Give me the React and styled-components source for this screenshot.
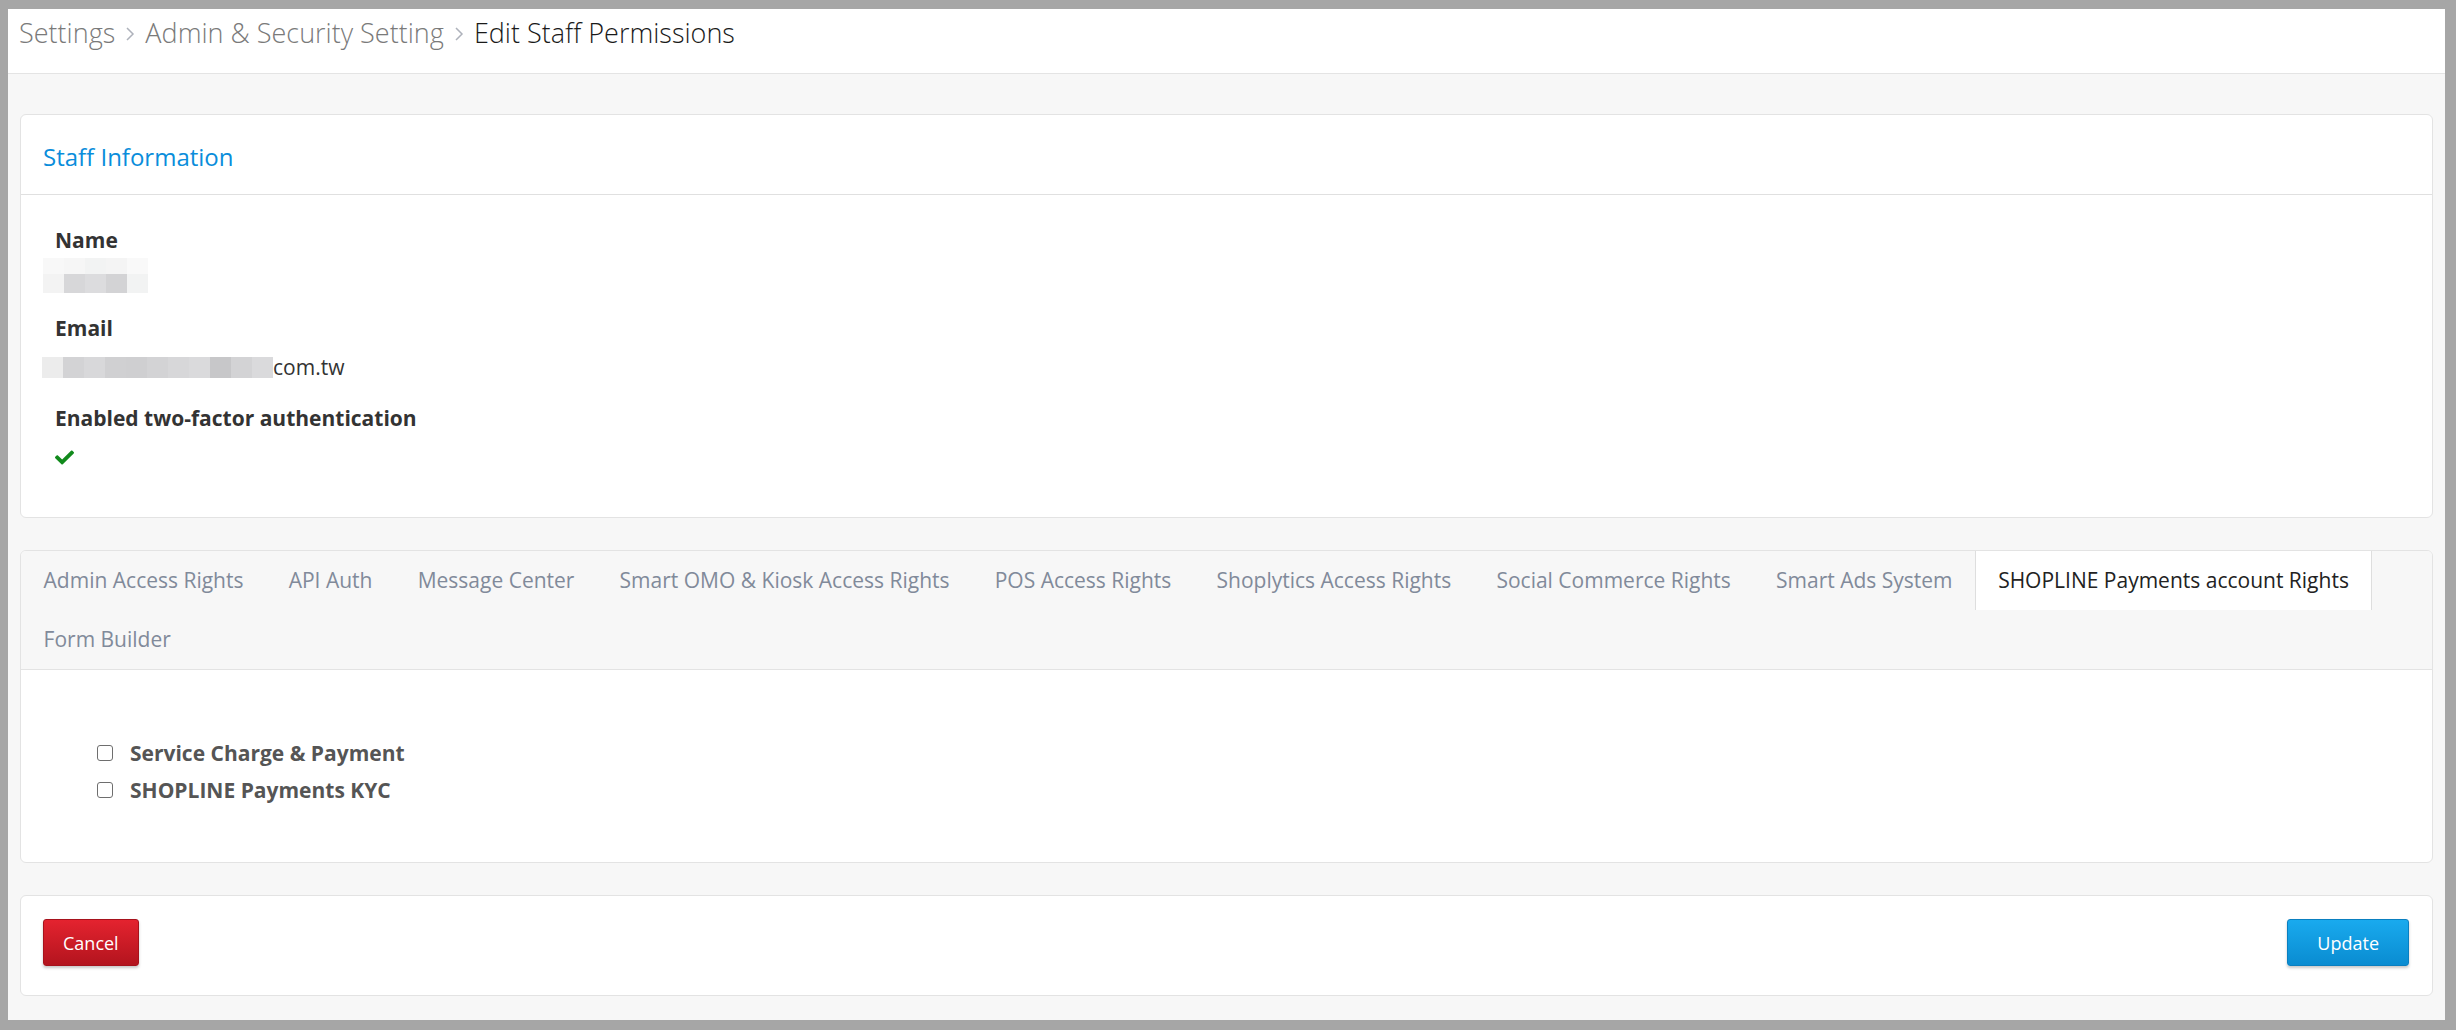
import styled, { createGlobalStyle } from "styled-components";
import { FaCheck } from "react-icons/fa";

const GlobalStyle = createGlobalStyle`
    html, body {
        margin: 0;
        padding: 0;
        background: #a6a6a6;
    }
    body {
        font-family: "Open Sans", "Liberation Sans", sans-serif;
        color: #333;
    }
    * { box-sizing: border-box; }
`;

const tabs = [
    "Admin Access Rights",
    "API Auth",
    "Message Center",
    "Smart OMO & Kiosk Access Rights",
    "POS Access Rights",
    "Shoplytics Access Rights",
    "Social Commerce Rights",
    "Smart Ads System",
    "SHOPLINE Payments account Rights",
    "Form Builder",
];

const nameBlur = [
    ["#f8f8f8", "#f6f6f6", "#f2f3f3", "#f4f4f4", "#f9f9f9"],
    ["#f3f3f3", "#d7d7d9", "#dcdcde", "#d3d3d5", "#f2f3f3"],
];
const emailBlur = ["#ececec", "#d3d3d5", "#d8d8da", "#d0d0d2", "#cfcfd1", "#d3d3d5", "#d7d7d9", "#dadadc", "#c7c7c9", "#d3d3d5", "#dadadc"];

export default function App() {
    return (
        <Page>
            <GlobalStyle />
            <Header>
                <Crumb>Settings</Crumb>
                <Chevron />
                <Crumb>Admin &amp; Security Setting</Crumb>
                <Chevron />
                <Crumb $current>Edit Staff Permissions</Crumb>
            </Header>
            <Main>
                <Card>
                    <CardHeader>Staff Information</CardHeader>
                    <CardBody>
                        <Field>
                            <Label>Name</Label>
                            <NameBlur>
                                {nameBlur.map((row, i) => (
                                    <BlurRow key={i}>
                                        {row.map((c, j) => <Pixel key={j} $color={c} $h={i === 0 ? 16 : 19} />)}
                                    </BlurRow>
                                ))}
                            </NameBlur>
                        </Field>
                        <Field>
                            <Label>Email</Label>
                            <Value>
                                <BlurRow $inline>
                                    {emailBlur.map((c, j) => <Pixel key={j} $color={c} $h={21} />)}
                                </BlurRow>
                                com.tw
                            </Value>
                        </Field>
                        <Field>
                            <Label>Enabled two-factor authentication</Label>
                            <Value>
                                <CheckMark />
                            </Value>
                        </Field>
                    </CardBody>
                </Card>

                <Card>
                    <TabBar>
                        {tabs.map((t) => (
                            <Tab key={t} $active={t.startsWith("SHOPLINE")}>{t}</Tab>
                        ))}
                    </TabBar>
                    <TabContent>
                        <CheckRow>
                            <Box type="checkbox" />
                            Service Charge &amp; Payment
                        </CheckRow>
                        <CheckRow>
                            <Box type="checkbox" />
                            SHOPLINE Payments KYC
                        </CheckRow>
                    </TabContent>
                </Card>

                <Card>
                    <Actions>
                        <Button $variant="danger">Cancel</Button>
                        <Button $variant="primary">Update</Button>
                    </Actions>
                </Card>
            </Main>
        </Page>
    );
}

function Chevron() {
    return (
        <ChevronIcon viewBox="0 0 12 18" width="12" height="18">
            <polyline points="3,3 9,9 3,15" fill="none" stroke="#aeb2bb" strokeWidth="1.5" />
        </ChevronIcon>
    );
}

const Page = styled.div`
    margin: 9px 11px 0 8px;
    height: 1011px;
    background: #f7f7f7;
    display: flex;
    flex-direction: column;
`;

const Header = styled.div`
    height: 65px;
    background: #fff;
    border-bottom: 1px solid #e4e4e4;
    display: flex;
    align-items: flex-start;
    gap: 9px;
    padding: 5px 11px 0;
`;

const Crumb = styled.span`
    font-family: "Open Sans Light", "Open Sans", "Liberation Sans", sans-serif;
    font-size: 27px;
    font-weight: 300;
    line-height: 37px;
    color: ${(p) => (p.$current ? "#1a1a1a" : "#7a7a7a")};
`;

const ChevronIcon = styled.svg`
    margin-top: 11px;
`;

const Main = styled.div`
    padding: 40px 12px 24px;
    display: flex;
    flex-direction: column;
    gap: 32px;
`;

const Card = styled.div`
    background: #fff;
    border: 1px solid #e3e3e3;
    border-radius: 6px;
    overflow: hidden;
`;

const CardHeader = styled.div`
    height: 80px;
    border-bottom: 1px solid #e0e0e0;
    padding: 4px 22px 0;
    display: flex;
    align-items: center;
    font-size: 24px;
    color: #0a8ddb;
`;

const CardBody = styled.div`
    padding: 29px 34px 25px;
`;

const Field = styled.div`
    margin-bottom: 19px;
`;

const Label = styled.div`
    font-size: 21px;
    font-weight: 700;
    line-height: 32px;
    color: #333;
`;

const Value = styled.div`
    margin-top: 7px;
    min-height: 32px;
    font-size: 21px;
    line-height: 32px;
    color: #333;
    display: flex;
    align-items: center;
`;

const NameBlur = styled.div`
    margin: 2px 0 2px -12px;
    display: flex;
    flex-direction: column;
`;

const BlurRow = styled.div`
    display: flex;
    margin-left: ${(p) => (p.$inline ? "-13px" : "0")};
`;

const Pixel = styled.span`
    width: 21px;
    height: ${(p) => p.$h}px;
    background: ${(p) => p.$color};
`;

const CheckMark = styled(FaCheck)`
    width: 19px;
    height: 19px;
    color: #118a1c;
`;

const TabBar = styled.div`
    display: flex;
    flex-wrap: wrap;
    background: #f7f7f7;
    border-bottom: 1px solid #e3e3e3;
`;

const Tab = styled.div`
    height: 59px;
    line-height: 59px;
    padding: 0 ${(p) => (p.$active ? "22px" : "22.6px")};
    font-size: 21px;
    white-space: nowrap;
    color: ${(p) => (p.$active ? "#222" : "#818a9a")};
    background: ${(p) => (p.$active ? "#fff" : "transparent")};
    border-left: ${(p) => (p.$active ? "1px solid #dedede" : "none")};
    border-right: ${(p) => (p.$active ? "1px solid #dedede" : "none")};
`;

const TabContent = styled.div`
    padding: 64px 76px 54px;
`;

const CheckRow = styled.label`
    display: flex;
    align-items: center;
    gap: 17px;
    height: 37px;
    font-size: 21px;
    font-weight: 700;
    color: #555;
`;

const Box = styled.input`
    appearance: none;
    margin: 0;
    width: 16px;
    height: 16px;
    border: 1.5px solid #6e6e6e;
    border-radius: 3px;
    background: #fff;
`;

const Actions = styled.div`
    display: flex;
    justify-content: space-between;
    align-items: center;
    padding: 23px 23px 29px 22px;
`;

const Button = styled.button`
    height: 47px;
    padding: 0 ${(p) => (p.$variant === "danger" ? "19px" : "29px")};
    border-radius: 3px;
    font-family: "Open Sans", "Liberation Sans", sans-serif;
    font-size: 18px;
    color: #fff;
    border: 1px solid ${(p) => (p.$variant === "danger" ? "#a6121c" : "#0a7fc0")};
    background: ${(p) =>
        p.$variant === "danger"
            ? "linear-gradient(#e4232f, #b3141e)"
            : "linear-gradient(#19aaee, #0a8cd1)"};
    box-shadow: 0 2px 3px rgba(0, 0, 0, 0.22);
    cursor: pointer;
`;
